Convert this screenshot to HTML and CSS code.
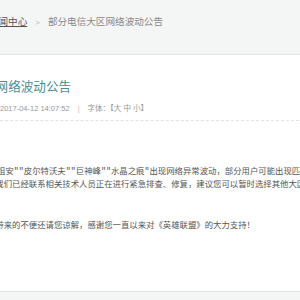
FILE: index.html
```html
<!DOCTYPE html>
<html>
<head>
    <meta charset="utf-8" />
    <meta name="viewport" content="width=device-width, initial-scale=1" />
    <title>部分电信大区网络波动公告</title>
    <link rel="stylesheet" href="styles.css">
</head>
<body>
    <div class="topbar">
        <div class="wrap">
            <div class="crumbs">
                <a href="#">首页</a><span class="sep">&gt;</span><a href="#" class="current-link">新闻中心</a><span class="sep">&gt;</span><span class="here">部分电信大区网络波动公告</span>
            </div>
        </div>
    </div>
    <div class="main">
        <div class="wrap">
            <h1 class="title">部分电信大区网络波动公告</h1>
            <div class="meta">
                <span>2017-04-12 14:07:52</span><span class="sep">|</span><span>字体：【<a href="#">大</a> <a href="#">中</a> <a href="#">小</a>】</span>
            </div>
            <div class="content">
                <p>今日下午 部分大区"祖安""皮尔特沃夫""巨神峰""水晶之痕"出现网络异常波动，部分用户可能出现匹配失败或掉线的情况。<br>失败或掉线的情况，我们已经联系相关技术人员正在进行紧急排查、修复，建议您可以暂时选择其他大区进行游戏。</p>
                <p>由此次网络问题给您带来的不便还请您谅解，感谢您一直以来对《英雄联盟》的大力支持！</p>
            </div>
        </div>
    </div>
    <div class="footer"></div>
</body>
</html>
```

FILE: styles.css
```css
body {
    margin: 0;
    background-color: #f4f5f5;
    font-family: "Liberation Sans", "Noto Sans CJK SC", sans-serif;
    overflow: hidden;
}

a {
    color: inherit;
    text-decoration: none;
}

.wrap {
    margin-left: -80px;
    width: 700px;
}

/* breadcrumb strip */
.topbar {
    height: 54px;
    border-bottom: 1px solid #e4e6e6;
    background-color: #f4f5f5;
}

.crumbs {
    padding-top: 12px;
    padding-left: 29px;
    font-size: 9.6px;
    line-height: 20px;
    color: #888;
    white-space: nowrap;
}

.crumbs .current-link {
    color: #555;
    text-decoration: underline;
}

.crumbs .sep {
    margin: 0 8px;
    font-size: 8px;
    color: #bbb;
}

/* article */
.main {
    height: 236px;
    background-color: white;
}

.title {
    margin: 0;
    padding-top: 22px;
    font-size: 12.6px;
    font-weight: normal;
    line-height: 21px;
    color: #4b8e93;
    white-space: nowrap;
}

.meta {
    margin-top: 5px;
    padding-left: 80px;
    padding-bottom: 5px;
    border-bottom: 1px dashed #e2e2e2;
    font-size: 7.5px;
    line-height: 12px;
    color: #999;
    white-space: nowrap;
}

.meta .sep {
    margin: 0 8px;
    color: #bbb;
}

.content {
    padding-top: 45px;
    font-family: "Liberation Mono", "Noto Sans CJK SC", monospace;
    font-size: 8.4px;
    line-height: 13px;
    color: #555;
}

.content p {
    margin: 0 0 28px;
    white-space: nowrap;
}

.footer {
    height: 20px;
    border-top: 1px solid #e2e4e4;
    background-color: #f4f5f5;
}
```
